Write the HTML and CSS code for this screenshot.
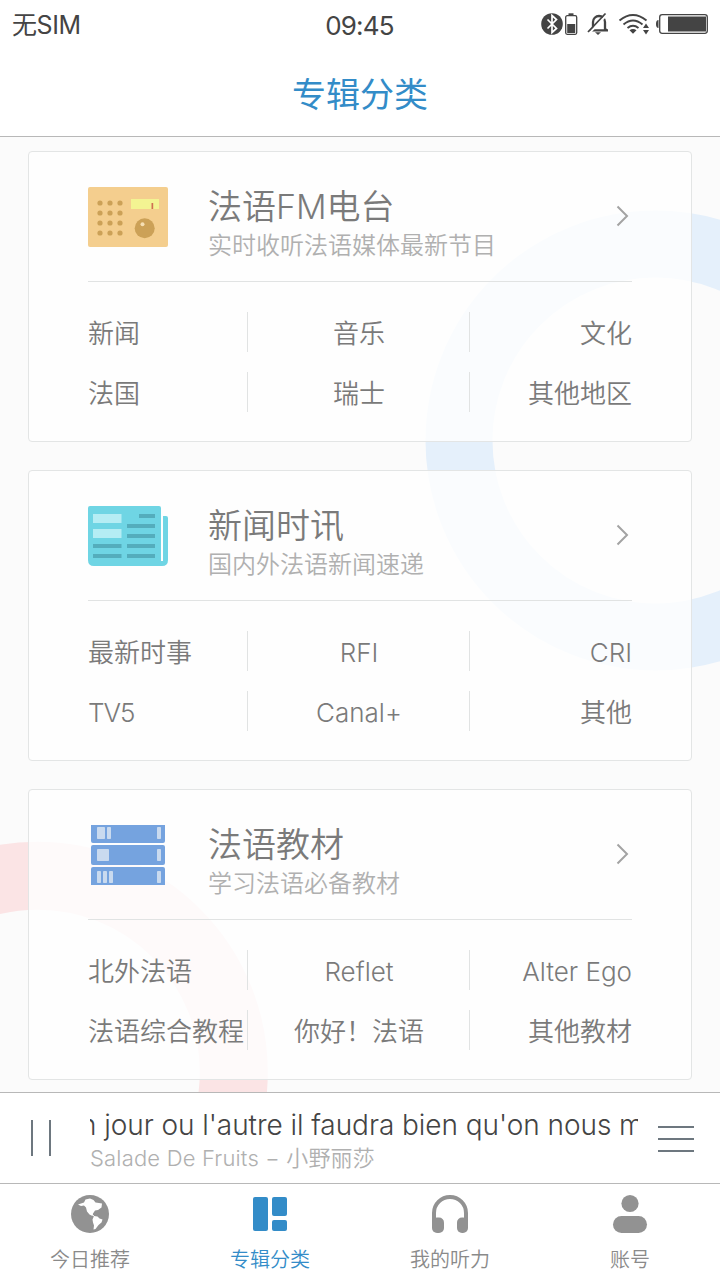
FILE: index.html
```html
<!DOCTYPE html>
<html lang="zh-CN">
<head>
<meta charset="utf-8">
<title>专辑分类</title>
<link rel="stylesheet" href="styles.css">
</head>
<body>
<div class="app">
  <header class="status">
    <span class="status-sim">无SIM</span>
    <span class="status-time">09:45</span>
    <svg class="status-icons" width="170" height="28" viewBox="0 0 170 28">
      <circle cx="12" cy="14" r="10.800" fill="#444"/>
      <path d="M7.500 9.500l9 9-4.500 4V5.500l4.500 4-9 9" fill="none" stroke="#fff" stroke-width="1.700"/>
      <path d="M28.500 3.300h5v2h-5z" fill="#444"/>
      <rect x="25.700" y="5.700" width="11" height="18.600" rx="1.500" fill="none" stroke="#444" stroke-width="1.300"/>
      <path d="M27.200 14h8v9h-8z" fill="#444"/>
      <path d="M50 20.300h18M53 19v-7a6 6 0 0 1 12 0v7l2 1.500" fill="none" stroke="#444" stroke-width="2.300"/>
      <path d="M55 22.300h6l-3 2.700z" fill="#444"/>
      <path d="M49 23.500L67 4.500" stroke="#fff" stroke-width="2"/>
      <path d="M48 22L65.500 3.500" stroke="#444" stroke-width="1.800"/>
      <path d="M79.500 10.500q13.500-11 27 0M83.500 14.500q9.500-8 19 0M87.500 18q5.500-4.500 11 0" fill="none" stroke="#444" stroke-width="1.900"/>
      <path d="M89.500 20.200q3.500-2.200 7 0l-3.500 3.500zM103 18l3-4.500 3 4.500zM103 20h6l-3 4.500z" fill="#444"/>
      <path d="M118.500 10q-2.500 0-2.500 4t2.500 4z" fill="#444"/>
      <rect x="119.700" y="4.700" width="47.600" height="18.600" rx="2.500" fill="#fff" stroke="#444" stroke-width="1.300"/>
      <path d="M128 6.500h38v15h-38z" fill="#444"/>
    </svg>
  </header>
  <h1 class="title">专辑分类</h1>

  <main class="content">
    <svg class="rings" width="720" height="955" viewBox="0 137 720 955">
      <circle cx="655.500" cy="440.500" r="196.500" fill="none" stroke="#e5f0fb" stroke-width="67"/>
      <circle cx="37.500" cy="1072" r="196.300" fill="none" stroke="#fbe4e5" stroke-width="68"/>
    </svg>

    <section class="card">
      <div class="card-head">
        <svg class="card-icon" width="80" height="60" viewBox="0 0 80 60">
          <rect width="80" height="60" rx="2" fill="#f4ce8e"/>
          <g fill="#cca157">
            <circle cx="12" cy="16" r="2.600"/><circle cx="22" cy="16" r="2.600"/><circle cx="32" cy="16" r="2.600"/>
            <circle cx="12" cy="26" r="2.600"/><circle cx="22" cy="26" r="2.600"/><circle cx="32" cy="26" r="2.600"/>
            <circle cx="12" cy="36" r="2.600"/><circle cx="22" cy="36" r="2.600"/><circle cx="32" cy="36" r="2.600"/>
            <circle cx="12" cy="46" r="2.600"/><circle cx="22" cy="46" r="2.600"/><circle cx="32" cy="46" r="2.600"/>
            <circle cx="56.700" cy="41.300" r="10"/>
          </g>
          <circle cx="54.500" cy="37.300" r="2" fill="#f6dfb4"/>
          <rect x="43" y="12" width="28" height="10" fill="#f3f492"/>
          <rect x="63.500" y="16" width="1.700" height="6" fill="#cf7052"/>
        </svg>
        <div class="card-text">
          <h2 class="card-title">法语FM电台</h2>
          <p class="card-desc">实时收听法语媒体最新节目</p>
        </div>
        <svg class="chevron" width="14" height="22" viewBox="0 0 14 22"><path d="M1.500 1.500L11 11l-9.500 9.500" fill="none" stroke="#a3a3a3" stroke-width="2"/></svg>
      </div>
      <div class="grid">
        <span class="cell">新闻</span><span class="cell">音乐</span><span class="cell">文化</span>
        <span class="cell">法国</span><span class="cell">瑞士</span><span class="cell">其他地区</span>
      </div>
    </section>

    <section class="card">
      <div class="card-head">
        <svg class="card-icon" width="80" height="60" viewBox="0 0 80 60">
          <path d="M2 0h69q2 0 2 2v53h2V10h3q2 0 2 2v42q0 6-6 6H6q-6 0-6-6V2q0-2 2-2z" fill="#6fd5e4"/>
          <path d="M5 8h28.500v9H5zM5 23h28.500v9H5z" fill="#b5edf4"/>
          <path d="M51 8h16v4H51zM39 18h28v4H39zM39 28h28v4H39zM5 38h28.500v4H5zM39 38h28v4H39zM5 48h28.500v4H5zM39 48h28v4H39z" fill="#54adbc"/>
        </svg>
        <div class="card-text">
          <h2 class="card-title">新闻时讯</h2>
          <p class="card-desc">国内外法语新闻速递</p>
        </div>
        <svg class="chevron" width="14" height="22" viewBox="0 0 14 22"><path d="M1.500 1.500L11 11l-9.500 9.500" fill="none" stroke="#a3a3a3" stroke-width="2"/></svg>
      </div>
      <div class="grid">
        <span class="cell">最新时事</span><span class="cell">RFI</span><span class="cell">CRI</span>
        <span class="cell tight">TV5</span><span class="cell">Canal+</span><span class="cell">其他</span>
      </div>
    </section>

    <section class="card">
      <div class="card-head">
        <svg class="card-icon" width="80" height="60" viewBox="0 0 80 60">
          <path d="M3 0h74v16q0 2-2 2H5q-2 0-2-2zM5 20h70q2 0 2 2v16q0 2-2 2H5q-2 0-2-2V22q0-2 2-2zM5 42h70q2 0 2 2v16H3V44q0-2 2-2z" fill="#75a3df"/>
          <g fill="#c9daef">
            <rect x="9" y="2" width="8" height="12" rx=".8"/><rect x="19" y="2" width="4" height="12" rx=".8"/>
            <rect x="9" y="24" width="12" height="12" rx=".8"/>
            <rect x="9" y="46" width="4" height="12" rx=".8"/><rect x="15" y="46" width="4" height="12" rx=".8"/><rect x="21" y="46" width="4" height="12" rx=".8"/>
            <rect x="69" y="2" width="4" height="12" rx=".8"/><rect x="69" y="24" width="4" height="12" rx=".8"/><rect x="69" y="46" width="4" height="12" rx=".8"/>
          </g>
        </svg>
        <div class="card-text">
          <h2 class="card-title">法语教材</h2>
          <p class="card-desc">学习法语必备教材</p>
        </div>
        <svg class="chevron" width="14" height="22" viewBox="0 0 14 22"><path d="M1.500 1.500L11 11l-9.500 9.500" fill="none" stroke="#a3a3a3" stroke-width="2"/></svg>
      </div>
      <div class="grid">
        <span class="cell">北外法语</span><span class="cell">Reflet</span><span class="cell">Alter Ego</span>
        <span class="cell">法语综合教程</span><span class="cell">你好！法语</span><span class="cell">其他教材</span>
      </div>
    </section>
  </main>

  <section class="player">
    <svg class="pause" width="22" height="36" viewBox="0 0 22 36"><path d="M2 0v36M20 0v36" stroke="#6d777f" stroke-width="2"/></svg>
    <div class="track">
      <p class="track-title"><span class="marquee">n jour ou l'autre il faudra bien qu'on nous m</span></p>
      <p class="track-artist">Salade De Fruits − 小野丽莎</p>
    </div>
    <svg class="menu" width="36" height="26" viewBox="0 0 36 26"><path d="M0 1h36M0 13h36M0 25h36" stroke="#6d777f" stroke-width="2"/></svg>
  </section>

  <nav class="tabs">
    <a class="tab">
      <svg width="40" height="40" viewBox="0 0 40 40">
        <circle cx="20" cy="20" r="19" fill="#929292"/>
        <path d="M8 10.500l6-2 1.500-3 4.500-1 3.500 1.500 2 2.500 3.500.5 3 .5-.5 4-3.500 2.500-3 .5-2 3-.5 2.500-3-1.500-2.500-3-1-4-2-2-3 .500zM24 22l3.500.5 2 2 3 1-1 3-3 2.500-3 4-2 .5.500-4-1-3-.5-3z" fill="#fff"/>
        <path d="M21.500 20l3 2.500" stroke="#fff"/>
      </svg>
      <span>今日推荐</span>
    </a>
    <a class="tab tab-active">
      <svg width="40" height="40" viewBox="0 0 40 40"><g fill="#338cc8"><rect x="3" y="3" width="15" height="34" rx="2"/><rect x="22" y="3" width="15" height="19" rx="2"/><rect x="22" y="26" width="15" height="11" rx="2"/></g></svg>
      <span>专辑分类</span>
    </a>
    <a class="tab">
      <svg width="40" height="40" viewBox="0 0 40 40"><path d="M4 30V19a16 16 0 0 1 32 0v11" fill="none" stroke="#929292" stroke-width="4"/><rect x="2" y="23.500" width="12" height="15.500" rx="5" fill="#929292"/><rect x="27" y="23.500" width="11" height="15.500" rx="5" fill="#929292"/></svg>
      <span>我的听力</span>
    </a>
    <a class="tab">
      <svg width="40" height="40" viewBox="0 0 40 40"><g fill="#929292"><circle cx="20" cy="9.500" r="8.600"/><rect x="3" y="22" width="34" height="17" rx="8.500"/></g></svg>
      <span>账号</span>
    </a>
  </nav>
</div>
</body>
</html>
```
FILE: styles.css
```css
* { box-sizing: border-box; }
body, h1, h2, p { margin: 0; font-weight: inherit; }
body { font-family: Inter, "Noto Sans CJK SC", sans-serif; font-weight: 350; color: #7a7a7a; }
.app { width: 720px; height: 1280px; display: flex; flex-direction: column; background: #fff; overflow: hidden; }

.status { height: 50px; display: grid; grid-template-columns: 1fr auto 1fr; align-items: center; padding: 0 10px 0 12px; font-size: 26px; font-weight: 400; color: #444; flex: none; }
.status-sim { font-size: 25px; line-height: 50px; letter-spacing: -.4px; }
.status-time { line-height: 52px; height: 50px; letter-spacing: -.8px; margin-right: 3px; }
.status-icons { justify-self: end; margin-bottom: 2px; }
.title { height: 87px; flex: none; border-bottom: 1px solid #b8b8b8; font-size: 34px; font-weight: 400; line-height: 89px; color: #338cc8; text-align: center; }

.content { position: relative; height: 955px; flex: none; padding: 14px 28px 0; display: flex; flex-direction: column; gap: 28px; background: #fbfbfb; overflow: hidden; }
.rings { position: absolute; left: 0; top: 0; }
.card { position: relative; height: 291px; flex: none; padding: 0 59px; border: 1px solid #e3e5e5; border-radius: 4px; background: rgba(255, 255, 255, .8); }
.card-head { height: 130px; display: flex; align-items: flex-start; padding-top: 35px; border-bottom: 1px solid #e1e3e3; }
.card-icon { flex: none; margin-right: 40px; }
.card-text { flex: 1; }
.card-title { font-size: 34px; line-height: 39px; }
.card-desc { font-size: 24px; line-height: 40px; color: #b0b0b0; }
.chevron { margin: 18px 2px 0 0; }
.grid { display: grid; grid-template-columns: 160px 222px 162px; grid-auto-rows: 40px; row-gap: 20px; padding-top: 30px; font-size: 26px; line-height: 44px; white-space: nowrap; }
.cell { border-right: 1px solid #e1e3e3; text-align: center; }
.cell:nth-child(3n+1) { text-align: left; }
.cell:nth-child(3n+2) { padding-left: 1px; }
.cell:nth-child(3n) { text-align: right; border-right: 0; }
.tight { letter-spacing: -1px; }

.player { height: 91px; flex: none; display: flex; align-items: center; padding: 0 26px 0 30px; border-top: 1px solid #b8b8b8; }
.pause { flex: none; margin-right: 38px; }
.track { width: 548px; flex: none; margin-right: 20px; }
.track-title { height: 40px; overflow: hidden; font-size: 28px; line-height: 41px; color: #444; white-space: nowrap; }
.marquee { display: inline-block; margin-left: -10px; letter-spacing: -.06px; }
.track-artist { font-size: 22px; line-height: 27px; letter-spacing: .18px; color: #b0b0b0; }
.menu { flex: none; margin-top: 2px; }

.tabs { height: 97px; flex: none; display: grid; grid-template-columns: repeat(4, 1fr); border-top: 1px solid #b8b8b8; }
.tab { display: flex; flex-direction: column; align-items: center; padding-top: 10px; font-size: 20px; line-height: 52px; color: #8a8a8a; }
.tab svg { flex: none; }
.tab-active { color: #338cc8; }
```
